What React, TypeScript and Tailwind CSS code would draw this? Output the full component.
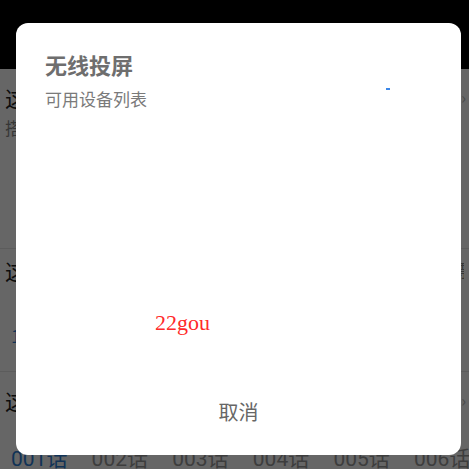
import React from "react";

const cjk = { fontFamily: '"Noto Sans CJK SC", "Noto Sans", sans-serif' };

export default function App() {
  const eps = ["001话", "002话", "003话", "004话", "005话", "006话"];
  return (
    <div className="relative w-[469px] h-[469px] overflow-hidden bg-white" style={cjk}>
      {/* page underneath */}
      <div className="flex flex-col w-full h-full">
        <div className="h-[69px] bg-black shrink-0" />
        <div className="h-[179px] shrink-0 flex flex-col px-[5px] pt-[13px]">
          <div className="flex items-center justify-between h-[30px]">
            <span className="text-[22px] leading-[30px] text-[#222]">这部作品简介</span>
            <span className="text-[16px] text-[#bbb] mr-[-2px]">›</span>
          </div>
          <div className="text-[17px] leading-[24px] text-[#888] mt-[4px]">搭配阅读推荐</div>
        </div>
        <div className="h-px bg-[#e6e6e6] shrink-0" />
        <div className="h-[122px] shrink-0 flex flex-col pt-[6px]">
          <div className="flex items-center justify-between px-[5px] h-[30px]">
            <span className="text-[22px] leading-[30px] text-[#222]">这部作品目录</span>
            <span className="text-[17px] leading-[24px] text-[#888] w-[8px] overflow-hidden whitespace-nowrap">票</span>
          </div>
          <div className="px-[11px] mt-[38px] text-[18px] leading-[24px] text-[#2f7fd8]">1</div>
        </div>
        <div className="h-px bg-[#e6e6e6] shrink-0" />
        <div className="flex flex-col pt-[13px]">
          <div className="flex items-center justify-between px-[5px] h-[30px]">
            <span className="text-[22px] leading-[30px] text-[#222]">这部作品章节</span>
            <span className="text-[16px] text-[#bbb] mr-[-2px]">›</span>
          </div>
          <div className="flex pl-[11px] mt-[32px]">
            {eps.map((e, i) => (
              <span
                key={e}
                className={`w-[80.6px] shrink-0 text-[21px] leading-[24px] whitespace-nowrap ${i === 0 ? "text-[#2f7fd8]" : "text-[#999]"}`}
                style={{ fontFamily: 'Roboto, "Noto Sans CJK SC", sans-serif' }}
              >
                {e}
              </span>
            ))}
          </div>
        </div>
      </div>

      {/* dim overlay */}
      <div className="absolute inset-0 bg-black/60" />

      {/* dialog */}
      <div className="absolute left-[16px] top-[23px] w-[445px] h-[432px] bg-white rounded-[12px] flex flex-col">
        <div className="relative pl-[29px] pt-[27px] shrink-0">
          <div className="text-[22px] leading-[28px] font-bold text-[#6e6e6e]">无线投屏</div>
          <div className="text-[17px] leading-[24px] text-[#7a7a7a] mt-[9px]">可用设备列表</div>
          <div className="absolute left-[370px] top-[65px] w-[4px] h-[2px] bg-[#3b87e8]" />
        </div>
        <div className="flex-1 relative">
          <span
            className="absolute left-[139px] top-[198px] text-[22px] leading-[28px] text-[#ff2a2a]"
            style={{ fontFamily: '"Liberation Serif", serif' }}
          >
            22gou
          </span>
        </div>
        <div className="h-[72px] shrink-0 flex items-start justify-center">
          <span className="text-[20px] leading-[28px] text-[#666] mt-[15px]">取消</span>
        </div>
      </div>
    </div>
  );
}
